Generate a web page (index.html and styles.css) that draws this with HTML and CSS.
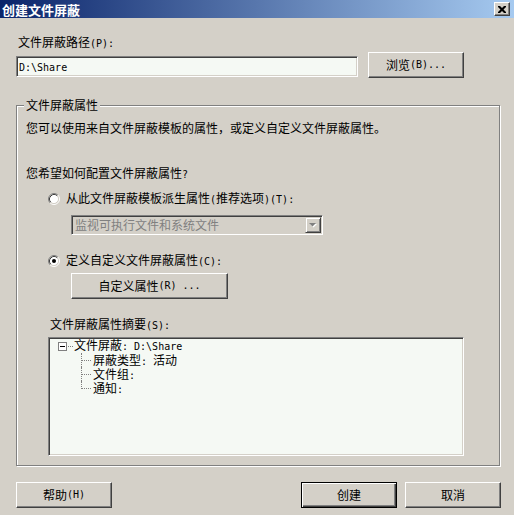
FILE: index.html
```html
<!DOCTYPE html>
<html>
<head>
<meta charset="utf-8">
<link rel="stylesheet" href="styles.css">
</head>
<body>
<div class="window">
  <div class="titlebar">
    <span class="title">创建文件屏蔽</span>
    <button class="close" aria-label="关闭">
      <svg width="8" height="7" viewBox="0 0 8 7"><path d="M0 0h2l2 2 2-2h2v1l-2.5 2.5L8 6v1H6L4 5 2 7H0V6l2.5-2.5L0 1z" fill="#000"/></svg>
    </button>
  </div>
  <div class="body">
    <div class="path-label">文件屏蔽路径<span class="en">(P):</span></div>
    <div class="path-row">
      <div class="edit"><span class="en">D:\Share</span></div>
      <button class="btn browse">浏览<span class="en">(B)...</span></button>
    </div>
    <div class="group">
      <div class="legend">文件屏蔽属性</div>
      <div class="desc">您可以使用来自文件屏蔽模板的属性，或定义自定义文件屏蔽属性。</div>
      <div class="question">您希望如何配置文件屏蔽属性<span class="en">?</span></div>
      <div class="radio-row r1">
        <svg class="radio" width="12" height="12" viewBox="0 0 12 12">
          <circle cx="6" cy="6" r="4.5" fill="#fff"/>
          <path d="M2.11 9.89A5.5 5.5 0 0 1 9.89 2.11" stroke="#808080" fill="none"/>
          <path d="M2.82 9.18A4.5 4.5 0 0 1 9.18 2.82" stroke="#404040" fill="none"/>
          <path d="M2.11 9.89A5.5 5.5 0 0 0 9.89 2.11" stroke="#fff" fill="none"/>
          <path d="M2.82 9.18A4.5 4.5 0 0 0 9.18 2.82" stroke="#d4d0c8" fill="none"/>
        </svg>
        <span>从此文件屏蔽模板派生属性<span class="en">(</span>推荐选项<span class="en">)(T):</span></span>
      </div>
      <div class="combo">
        <span class="combo-text">监视可执行文件和系统文件</span>
        <span class="combo-btn">
          <svg width="8" height="5" viewBox="0 0 8 5"><path d="M1 1h7L4.5 4.5z" fill="#fff"/><path d="M0 0h7L3.5 3.5z" fill="#808080"/></svg>
        </span>
      </div>
      <div class="radio-row r2">
        <svg class="radio" width="12" height="12" viewBox="0 0 12 12">
          <circle cx="6" cy="6" r="4.5" fill="#fff"/>
          <path d="M2.11 9.89A5.5 5.5 0 0 1 9.89 2.11" stroke="#808080" fill="none"/>
          <path d="M2.82 9.18A4.5 4.5 0 0 1 9.18 2.82" stroke="#404040" fill="none"/>
          <path d="M2.11 9.89A5.5 5.5 0 0 0 9.89 2.11" stroke="#fff" fill="none"/>
          <path d="M2.82 9.18A4.5 4.5 0 0 0 9.18 2.82" stroke="#d4d0c8" fill="none"/>
          <circle cx="6" cy="6" r="2" fill="#000"/>
        </svg>
        <span>定义自定义文件屏蔽属性<span class="en">(C):</span></span>
      </div>
      <button class="btn custom">自定义属性<span class="en">(R) ...</span></button>
      <div class="summary-label">文件屏蔽属性摘要<span class="en">(S):</span></div>
      <div class="listbox">
        <div class="tree-root">
          <span class="expander"></span><span class="hline"></span><span class="root-text">文件屏蔽<span class="en">: D:\Share</span></span>
        </div>
        <div class="tree-children">
          <div class="tree-item">屏蔽类型<span class="en">: </span>活动</div>
          <div class="tree-item">文件组<span class="en">:</span></div>
          <div class="tree-item last">通知<span class="en">:</span></div>
        </div>
      </div>
    </div>
    <div class="footer">
      <button class="btn">帮助<span class="en">(H)</span></button>
      <div class="spacer"></div>
      <button class="btn default">创建</button>
      <button class="btn">取消</button>
    </div>
  </div>
</div>
</body>
</html>
```

FILE: styles.css
```css
* { box-sizing: border-box; }

html, body {
  margin: 0;
  padding: 0;
  background: #d4d0c8;
}

.window {
  width: 514px;
  height: 515px;
  background: #d4d0c8;
  font-family: "Noto Sans CJK SC", "Noto Sans", sans-serif;
  font-size: 12px;
  line-height: 12px;
  color: #000;
  overflow: hidden;
}

.en {
  font-family: "DejaVu Sans Mono", "Liberation Mono", monospace;
  font-size: 10px;
}

/* Title bar */
.titlebar {
  height: 18px;
  display: flex;
  align-items: center;
  justify-content: space-between;
  padding: 0 4px 0 2px;
  background: linear-gradient(to right, #0a246a, #a6caf0);
}

.title {
  color: #fff;
  font-weight: bold;
  font-size: 13px;
  line-height: 13px;
  padding-top: 1px;
}

.close {
  width: 16px;
  height: 14px;
  padding: 0;
  margin: 0;
  display: flex;
  align-items: center;
  justify-content: center;
  background: #d4d0c8;
  border: 1px solid;
  border-color: #fff #404040 #404040 #fff;
  box-shadow: inset -1px -1px 0 #808080;
}

/* Body */
.body {
  padding: 18px 13px 0 16px;
}

.path-label {
  height: 12px;
  padding-left: 2px;
}

.path-row {
  display: flex;
  align-items: flex-start;
  margin-top: 4px;
  height: 26px;
}

.edit {
  width: 342px;
  height: 21px;
  margin-top: 4px;
  background: #f5f9f4;
  border: 1px solid;
  border-color: #808080 #fff #fff #808080;
  box-shadow: inset 1px 1px 0 #404040, inset -1px -1px 0 #d4d0c8;
  padding: 3px 0 0 2px;
  line-height: 12px;
}

.btn {
  font-family: inherit;
  font-size: 12px;
  line-height: 12px;
  color: #000;
  width: 96px;
  height: 26px;
  padding: 0;
  margin: 0;
  background: #d4d0c8;
  border: 1px solid;
  border-color: #fff #404040 #404040 #fff;
  box-shadow: inset -1px -1px 0 #808080;
  display: flex;
  align-items: center;
  justify-content: center;
}

.browse {
  margin-left: 10px;
}

/* Group box */
.group {
  position: relative;
  width: 484px;
  height: 361px;
  margin-top: 27px;
  border: 1px solid #808080;
  box-shadow: inset 1px 1px 0 #fff, 1px 1px 0 #fff;
}

.legend {
  position: absolute;
  top: -7px;
  left: 7px;
  padding: 0 2px;
  background: #d4d0c8;
  line-height: 12px;
}

.desc {
  margin: 16px 0 0 9px;
  height: 12px;
}

.question {
  margin: 33px 0 0 9px;
  height: 12px;
}

.radio-row {
  display: flex;
  align-items: center;
  gap: 6px;
  height: 12px;
  margin-left: 31px;
}

.radio { flex: none; display: block; }

.r1 { margin-top: 14px; }
.r2 { margin-top: 20px; }

.combo {
  display: flex;
  align-items: center;
  justify-content: space-between;
  width: 252px;
  height: 20px;
  margin: 10px 0 0 54px;
  border: 1px solid;
  border-color: #808080 #fff #fff #808080;
  box-shadow: inset 1px 1px 0 #404040, inset -1px -1px 0 #d4d0c8;
  padding: 1px 2px 1px 3px;
}

.combo-text {
  color: #808080;
}

.combo-btn {
  width: 16px;
  height: 16px;
  margin-right: -1px;
  display: flex;
  align-items: center;
  justify-content: center;
  border: 1px solid;
  border-color: #d4d0c8 #404040 #404040 #d4d0c8;
  box-shadow: inset 1px 1px 0 #fff, inset -1px -1px 0 #808080;
}

.custom {
  width: 157px;
  margin: 6px 0 0 54px;
}

.summary-label {
  margin: 19px 0 0 33px;
  height: 12px;
}

.listbox {
  width: 416px;
  height: 119px;
  margin: 7px 0 0 31px;
  background: #f5f9f4;
  border: 1px solid;
  border-color: #808080 #fff #fff #808080;
  box-shadow: inset 1px 1px 0 #404040, inset -1px -1px 0 #d4d0c8;
  padding: 1px;
}

.tree-root {
  display: flex;
  align-items: center;
  height: 14px;
  line-height: 14px;
  padding-left: 8px;
}

.expander {
  position: relative;
  width: 9px;
  height: 9px;
  flex: none;
  border: 1px solid #808080;
  background: #fff;
}

.expander::after {
  content: "";
  position: absolute;
  left: 1px;
  top: 3px;
  width: 5px;
  height: 1px;
  background: #000;
}

.hline {
  width: 5px;
  margin-left: 1px;
  border-top: 1px dotted #808080;
  flex: none;
}

.root-text {
  margin-left: 1px;
}

.tree-children {
  padding-left: 31px;
}

.tree-item {
  position: relative;
  height: 14px;
  line-height: 14px;
  padding-left: 12px;
}

.tree-item::before {
  content: "";
  position: absolute;
  left: 0;
  top: 0;
  bottom: 0;
  border-left: 1px dotted #808080;
}

.tree-item.last::before {
  bottom: 6px;
}

.tree-item::after {
  content: "";
  position: absolute;
  left: 1px;
  top: 7px;
  width: 9px;
  border-top: 1px dotted #808080;
}

/* Footer */
.footer {
  display: flex;
  gap: 8px;
  width: 485px;
  margin-top: 16px;
}

.spacer { flex: 1; }

.default {
  border: 1px solid #000;
  box-shadow: inset 1px 1px 0 #fff, inset -1px -1px 0 #404040, inset -2px -2px 0 #808080;
}
```
